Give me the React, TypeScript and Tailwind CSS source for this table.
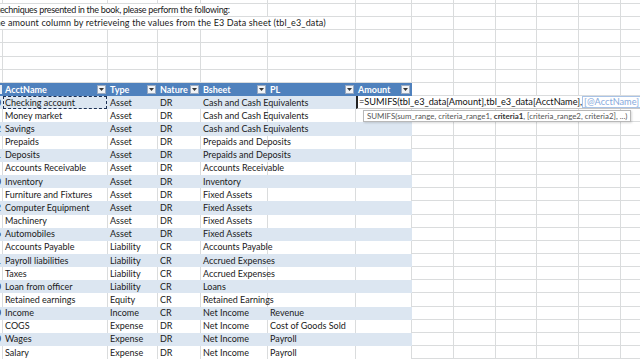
import React from "react";

const colW = [
  "w-[3px]",
  "w-[105px]",
  "w-[50px]",
  "w-[43px]",
  "w-[67px]",
  "w-[88px]",
  "w-[56px]",
  "w-[42px]",
  "w-[42px]",
  "w-[41px]",
  "w-[42px]",
  "w-[42px]",
  "w-[42px]",
];

const headers = ["", "AcctName", "Type", "Nature", "Bsheet", "PL", "Amount"];

const rows: [string, string, string, string, string, string][] = [
  ["0", "Checking account", "Asset", "DR", "Cash and Cash Equivalents", ""],
  ["1", "Money market", "Asset", "DR", "Cash and Cash Equivalents", ""],
  ["2", "Savings", "Asset", "DR", "Cash and Cash Equivalents", ""],
  ["0", "Prepaids", "Asset", "DR", "Prepaids and Deposits", ""],
  ["1", "Deposits", "Asset", "DR", "Prepaids and Deposits", ""],
  ["2", "Accounts Receivable", "Asset", "DR", "Accounts Receivable", ""],
  ["0", "Inventory", "Asset", "DR", "Inventory", ""],
  ["0", "Furniture and Fixtures", "Asset", "DR", "Fixed Assets", ""],
  ["2", "Computer Equipment", "Asset", "DR", "Fixed Assets", ""],
  ["4", "Machinery", "Asset", "DR", "Fixed Assets", ""],
  ["6", "Automobiles", "Asset", "DR", "Fixed Assets", ""],
  ["0", "Accounts Payable", "Liability", "CR", "Accounts Payable", ""],
  ["1", "Payroll liabilities", "Liability", "CR", "Accrued Expenses", ""],
  ["2", "Taxes", "Liability", "CR", "Accrued Expenses", ""],
  ["0", "Loan from officer", "Liability", "CR", "Loans", ""],
  ["0", "Retained earnings", "Equity", "CR", "Retained Earnings", ""],
  ["0", "Income", "Income", "CR", "Net Income", "Revenue"],
  ["0", "COGS", "Expense", "DR", "Net Income", "Cost of Goods Sold"],
  ["0", "Wages", "Expense", "DR", "Net Income", "Payroll"],
  ["1", "Salary", "Expense", "DR", "Net Income", "Payroll"],
];

const grid = "border-r border-b border-[#dadcdd]";

function GridCells({ from }: { from: number }) {
  return (
    <>
      {colW.slice(from).map((w, i) => (
        <div key={i} className={`${w} shrink-0 h-full ${grid}`} />
      ))}
    </>
  );
}

function Dropdown() {
  return (
    <div className="ml-auto mr-[2px] flex h-[9px] w-[9px] shrink-0 items-center justify-center border border-[#9aa9bf] bg-[#f1f3f6]">
      <svg width="5" height="3" viewBox="0 0 5 3">
        <path d="M0 0h5L2.5 3z" fill="#333" />
      </svg>
    </div>
  );
}

function TextRow({ text, span, offset, rest }: { text: string; span: string; offset: string; rest: number }) {
  return (
    <div className="flex h-[13.17px]">
      <div className={`${span} shrink-0 h-full overflow-hidden whitespace-nowrap border-r border-b border-[#dadcdd]`}>
        <span className={`block ${offset} leading-[12px] text-[#1a1a1a]`}>{text}</span>
      </div>
      <GridCells from={rest} />
    </div>
  );
}

function Editor() {
  return (
    <>
      <div className="absolute left-0 top-0 z-20 flex h-[13.17px] w-[290px] items-center whitespace-nowrap border-l-2 border-b border-[#222] border-b-[#c8c8c8] bg-white pl-[1px] text-[9.2px] text-[#111]">
        =SUMIFS(tbl_e3_data[Amount],tbl_e3_data[AcctName],
        <span className="border border-[#a9c3e6] px-[1px] leading-[10px] text-[#86a9dc]">[@AcctName]</span>
      </div>
      <div className="absolute left-[7px] top-[14px] z-20 whitespace-nowrap border border-[#b8b8b8] bg-white px-[3px] text-[7.9px] leading-[10px] text-[#555] shadow-[1px_1px_2px_rgba(0,0,0,0.15)]">
        SUMIFS(sum_range, criteria_range1, <b className="text-[#333]">criteria1</b>, [criteria_range2, criteria2], ...)
      </div>
    </>
  );
}

export default function App() {
  return (
    <div className="h-[360px] w-[640px] overflow-hidden bg-white font-['Lato','Liberation_Sans',sans-serif] text-[9px]">
      <div className="flex h-[4px]">
        <GridCells from={0} />
      </div>
      <TextRow
        text="techniques presented in the book, please perform the following:"
        span="w-[268px]"
        offset="-ml-[3px] tracking-[-0.3px]"
        rest={5}
      />
      <TextRow
        text="the amount column by retrieveing the values from the E3 Data sheet (tbl_e3_data)"
        span="w-[356px]"
        offset="-ml-[8px] tracking-[0.15px]"
        rest={6}
      />
      {[0, 1, 2, 3].map((r) => (
        <div key={r} className="flex h-[13.17px]">
          <GridCells from={0} />
        </div>
      ))}

      <div className="flex h-[13.17px]">
        {headers.map((h, i) => (
          <div
            key={i}
            className={`${colW[i]} shrink-0 flex h-full items-center overflow-hidden bg-[#4f81bd] font-bold text-white`}
          >
            {i === 0 ? (
              <div className="h-[9px] w-[2px] bg-[#e9edf3]" />
            ) : (
              <>
                <span className="pl-[2px] leading-[12px]">{h}</span>
                <Dropdown />
              </>
            )}
          </div>
        ))}
        <GridCells from={7} />
      </div>

      {rows.map((r, ri) => {
        const band = ri % 2 === 0;
        const cellCls = band
          ? "bg-[#dce6f1] border-r border-[#dce6f1]"
          : "bg-white border-r border-[#dadcdd]";
        return (
          <div key={ri} className="flex h-[13.17px]">
            <div className={`${colW[0]} shrink-0 flex h-full items-center justify-end overflow-hidden pr-[2px] ${band ? "bg-[#dce6f1]" : "bg-white border-r border-[#dadcdd]"}`}>
              <span className="leading-[12px] text-[#1a1a1a]">{r[0]}</span>
            </div>
            {r.slice(1).map((v, ci) => (
              <div
                key={ci}
                className={`${colW[ci + 1]} relative shrink-0 flex h-full items-center whitespace-nowrap pl-[2px] text-[#1a1a1a] ${cellCls}`}
              >
                <span className="relative z-10 leading-[12px]">{v}</span>
                {ri === 0 && ci === 0 && (
                  <div className="absolute inset-0 border border-dashed border-[#1b2f52]" />
                )}
              </div>
            ))}
            <div className={`${colW[6]} relative shrink-0 h-full ${ri === 0 ? "bg-white" : cellCls}`}>
              {ri === 0 && <Editor />}
            </div>
            <GridCells from={7} />
          </div>
        );
      })}
    </div>
  );
}
